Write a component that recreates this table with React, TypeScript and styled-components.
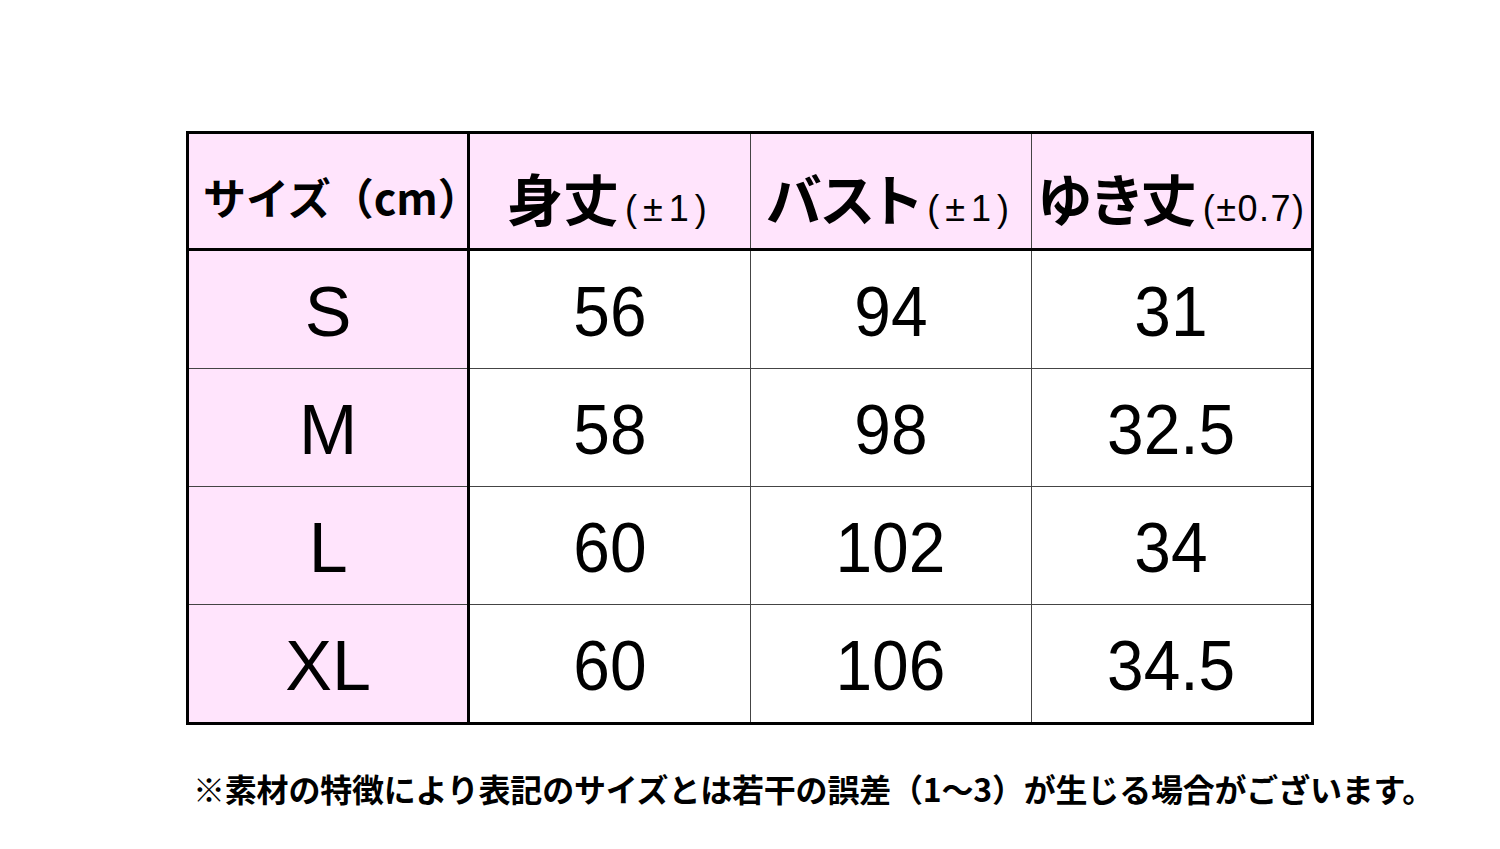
import React, { FunctionComponent } from "react";
import styled, { createGlobalStyle } from "styled-components";

const GlobalStyle = createGlobalStyle`
  html, body {
    margin: 0;
    padding: 0;
    background: #ffffff;
  }
  body {
    font-family: "Liberation Sans", "Noto Sans CJK JP", sans-serif;
    color: #000000;
  }
`;

const Page = styled.div`
  width: 1500px;
  height: 849px;
  box-sizing: border-box;
  padding: 131px 0 0 186px;
`;

const SizeTable = styled.table`
  border-collapse: collapse;
  table-layout: fixed;
  width: 1128px;
  border: 3px solid #000;
`;

const HeadCell = styled.th<{ $first?: boolean }>`
  height: 104px;
  padding: ${(p) => (p.$first ? "10px 0 0 14px" : "10px 0 0")};
  background: #ffe4fc;
  border-bottom: 3px solid #000;
  border-left: 1px solid #444;
  border-right: ${(p) => (p.$first ? "3px solid #000" : "1px solid #444")};
  font-family: "Noto Sans CJK JP", sans-serif;
  font-weight: 700;
  font-size: ${(p) => (p.$first ? "43px" : "56px")};
  font-feature-settings: ${(p) => (p.$first ? "normal" : '"palt"')};
  white-space: nowrap;
  text-align: center;
  vertical-align: middle;
`;

const Tolerance = styled.span<{ $spacing: number }>`
  font-family: "Liberation Sans", sans-serif;
  font-weight: 400;
  font-size: 36px;
  margin-left: 6px;
  letter-spacing: ${(p) => p.$spacing}px;
`;

const Cell = styled.td<{ $first?: boolean }>`
  height: 113px;
  padding: 4px 0 0;
  background: ${(p) => (p.$first ? "#ffe4fc" : "#ffffff")};
  border-top: 1px solid #444;
  border-left: 1px solid #444;
  border-right: ${(p) => (p.$first ? "3px solid #000" : "1px solid #444")};
  font-family: "Liberation Sans", sans-serif;
  font-size: 70px;
  text-align: center;
  vertical-align: middle;
`;

const Digits = styled.span`
  display: inline-block;
  transform: scaleX(0.94);
`;

const Note = styled.p`
  margin: 44px 0 0 7px;
  font-family: "Noto Sans CJK JP", sans-serif;
  font-weight: 700;
  font-size: 32px;
  line-height: 38px;
  letter-spacing: -0.2px;
  white-space: nowrap;
`;

const headers = [
  { label: "身丈", tol: "(±1)", spacing: 6 },
  { label: "バスト", tol: "(±1)", spacing: 6 },
  { label: "ゆき丈", tol: "(±0.7)", spacing: 1.5 },
];

const rows = [
  { size: "S", values: ["56", "94", "31"] },
  { size: "M", values: ["58", "98", "32.5"] },
  { size: "L", values: ["60", "102", "34"] },
  { size: "XL", values: ["60", "106", "34.5"] },
];

const App: FunctionComponent = () => {
  return (
    <>
      <GlobalStyle />
      <Page>
        <SizeTable>
          <thead>
            <tr>
              <HeadCell $first>サイズ（cm）</HeadCell>
              {headers.map((h) => (
                <HeadCell key={h.label}>
                  {h.label}
                  <Tolerance $spacing={h.spacing}>{h.tol}</Tolerance>
                </HeadCell>
              ))}
            </tr>
          </thead>
          <tbody>
            {rows.map((r) => (
              <tr key={r.size}>
                <Cell $first>{r.size}</Cell>
                {r.values.map((v, i) => (
                  <Cell key={i}>
                    <Digits>{v}</Digits>
                  </Cell>
                ))}
              </tr>
            ))}
          </tbody>
        </SizeTable>
        <Note>※素材の特徴により表記のサイズとは若干の誤差（1～3）が生じる場合がございます。</Note>
      </Page>
    </>
  );
};

export default App;
